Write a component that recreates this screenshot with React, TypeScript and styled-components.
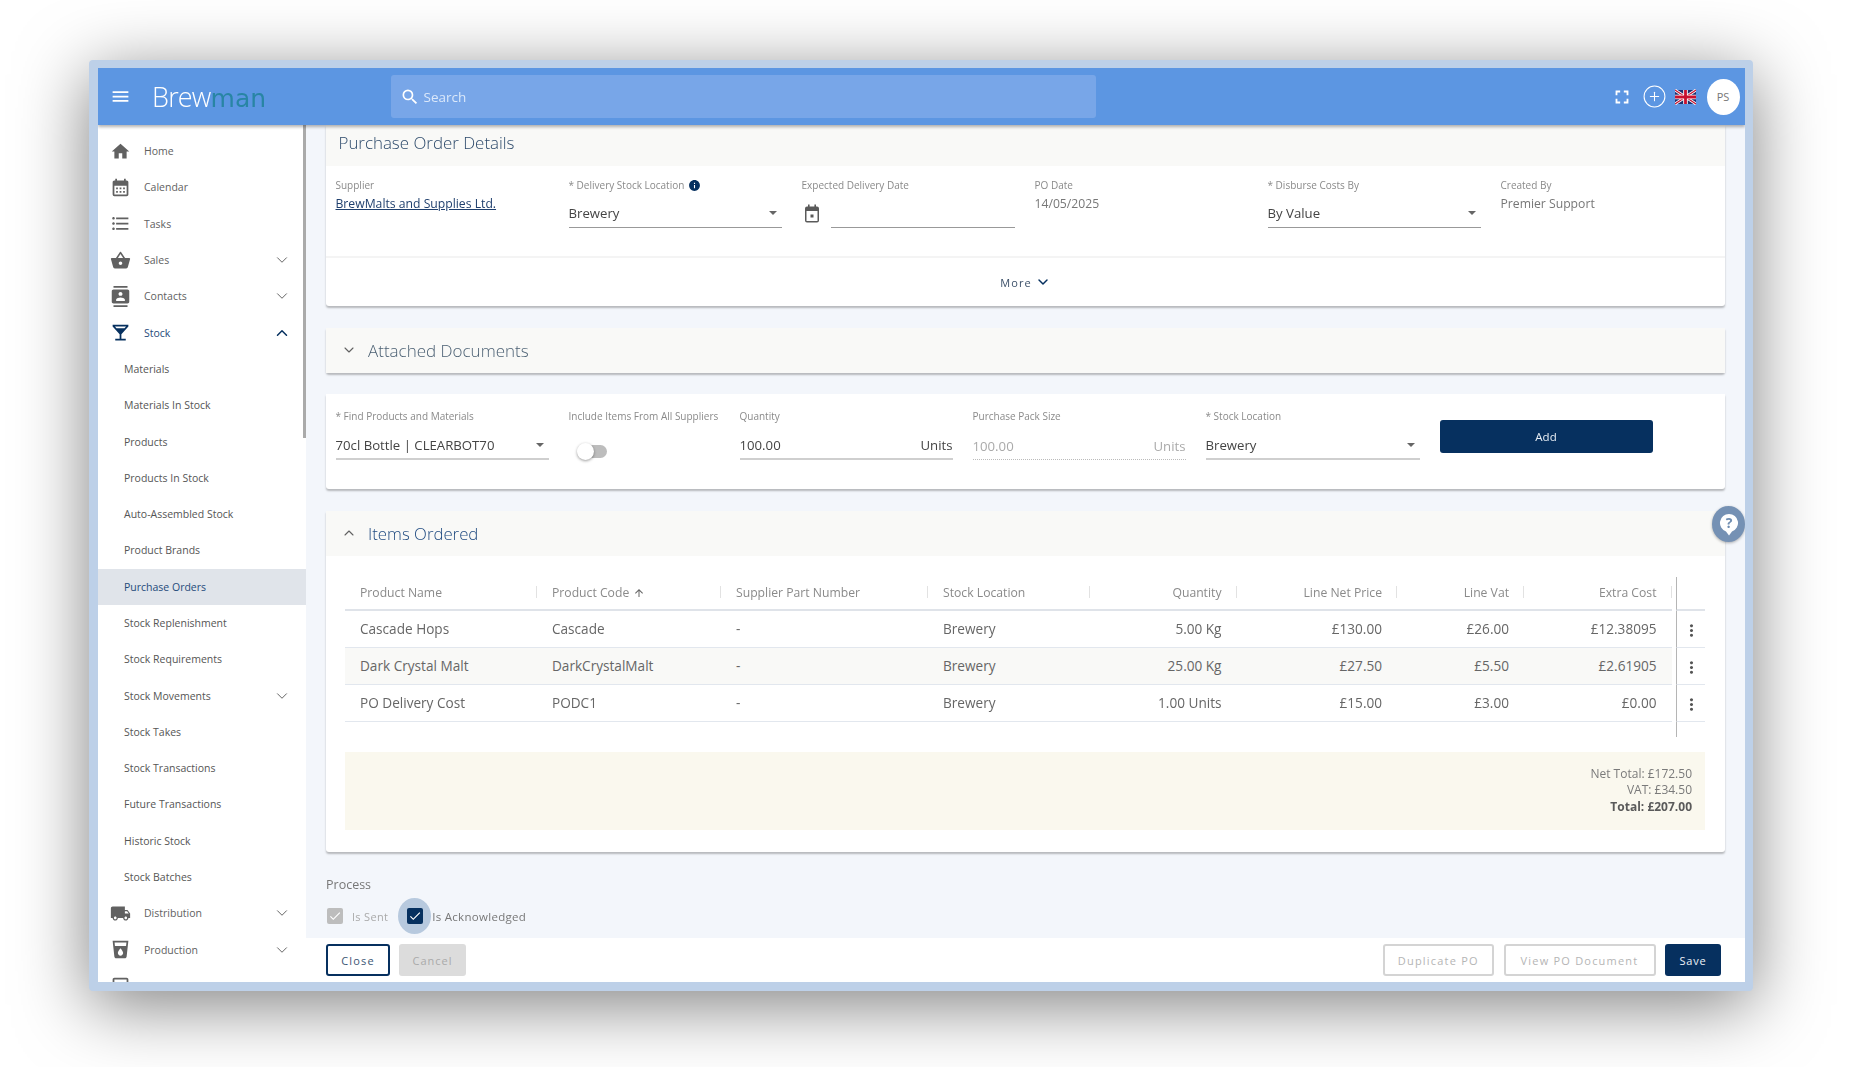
import React from 'react';
import styled, { createGlobalStyle } from 'styled-components';
import { ChevronDown, ChevronUp, CirclePlus } from 'lucide-react';
import {
  MdArrowUpward,
  MdCalendarMonth,
  MdCheck,
  MdCheckBoxOutlineBlank,
  MdContacts,
  MdFormatListBulleted,
  MdFullscreen,
  MdHome,
  MdInfo,
  MdLocalBar,
  MdLocalDrink,
  MdLocalShipping,
  MdMenu,
  MdMoreVert,
  MdSearch,
  MdShoppingBasket,
} from 'react-icons/md';

const navy = '#06305f';
const grey = '#616161';

const GlobalStyle = createGlobalStyle`
  html, body {
    margin: 0;
    padding: 0;
    background: #fff;
    font-family: "Open Sans", "Noto Sans", sans-serif;
  }
  * { box-sizing: border-box; }
`;

type NavItem = {
  label: string;
  icon?: React.ReactNode;
  open?: boolean;
  hasChildren?: boolean;
  active?: boolean;
  sub?: boolean;
};

const navItems: NavItem[] = [
  { label: 'Home', icon: <MdHome /> },
  { label: 'Calendar', icon: <MdCalendarMonth /> },
  { label: 'Tasks', icon: <MdFormatListBulleted /> },
  { label: 'Sales', icon: <MdShoppingBasket />, hasChildren: true },
  { label: 'Contacts', icon: <MdContacts />, hasChildren: true },
  { label: 'Stock', icon: <MdLocalBar />, hasChildren: true, open: true },
  { label: 'Materials', sub: true },
  { label: 'Materials In Stock', sub: true },
  { label: 'Products', sub: true },
  { label: 'Products In Stock', sub: true },
  { label: 'Auto-Assembled Stock', sub: true },
  { label: 'Product Brands', sub: true },
  { label: 'Purchase Orders', sub: true, active: true },
  { label: 'Stock Replenishment', sub: true },
  { label: 'Stock Requirements', sub: true },
  { label: 'Stock Movements', sub: true, hasChildren: true },
  { label: 'Stock Takes', sub: true },
  { label: 'Stock Transactions', sub: true },
  { label: 'Future Transactions', sub: true },
  { label: 'Historic Stock', sub: true },
  { label: 'Stock Batches', sub: true },
  { label: 'Distribution', icon: <MdLocalShipping />, hasChildren: true },
  { label: 'Production', icon: <MdLocalDrink />, hasChildren: true },
  { label: 'Purchasing', icon: <MdCheckBoxOutlineBlank />, hasChildren: true },
];

const orderRows = [
  ['Cascade Hops', 'Cascade', '-', 'Brewery', '5.00 Kg', '£130.00', '£26.00', '£12.38095'],
  ['Dark Crystal Malt', 'DarkCrystalMalt', '-', 'Brewery', '25.00 Kg', '£27.50', '£5.50', '£2.61905'],
  ['PO Delivery Cost', 'PODC1', '-', 'Brewery', '1.00 Units', '£15.00', '£3.00', '£0.00'],
];

const UkFlag = () => (
  <svg width="21" height="16" viewBox="0 0 60 40">
    <rect width="60" height="40" fill="#1d2f6f" />
    <path d="M0 0 60 40M60 0 0 40" stroke="#fff" strokeWidth="8" />
    <path d="M0 0 60 40M60 0 0 40" stroke="#c8102e" strokeWidth="3" />
    <path d="M30 0V40M0 20H60" stroke="#fff" strokeWidth="13" />
    <path d="M30 0V40M0 20H60" stroke="#c8102e" strokeWidth="8" />
  </svg>
);

const CalendarGlyph = () => (
  <svg width="14" height="19" viewBox="0 0 14 19">
    <path d="M3 0.5h1.6v2h4.8v-2H11v2h1a2 2 0 0 1 2 2v12a2 2 0 0 1-2 2H2a2 2 0 0 1-2-2v-12a2 2 0 0 1 2-2h1z" fill="#5a5a5a" />
    <rect x="1.5" y="7" width="11" height="10" fill="#fff" />
    <rect x="5.5" y="10.5" width="3" height="3" fill="#5a5a5a" />
  </svg>
);

const HelpBubble = () => (
  <svg width="20" height="23" viewBox="0 0 20 23">
    <path d="M10 1a9 9 0 0 1 3 17.5L10 22.5 7 18.5A9 9 0 0 1 10 1z" fill="#fff" />
    <text x="10" y="15" textAnchor="middle" fontSize="14" fontWeight="700" fontFamily="Open Sans, sans-serif" fill="#6f8db1">?</text>
  </svg>
);

const App = () => (
  <Page>
    <GlobalStyle />
    <Window>
      <TopBar>
        <Brand>
          <MenuButton><MdMenu /></MenuButton>
          <Logo>Brew<LogoAccent>man</LogoAccent></Logo>
        </Brand>
        <SearchBox>
          <MdSearch />
          <span>Search</span>
        </SearchBox>
        <TopActions>
          <MdFullscreen size={22} />
          <CirclePlus size={25} strokeWidth={1} />
          <UkFlag />
          <Avatar>PS</Avatar>
        </TopActions>
      </TopBar>

      <Body>
        <Sidebar>
          <ScrollThumb />
          {navItems.map(item => (
            <NavRow key={item.label} $sub={item.sub} $active={item.active}>
              {item.icon && <NavIcon $open={item.open}>{item.icon}</NavIcon>}
              <NavLabel $open={item.open} $active={item.active} $sub={item.sub}>{item.label}</NavLabel>
              {item.hasChildren && (
                <NavChevron $open={item.open}>
                  {item.open ? <ChevronUp size={18} strokeWidth={2} /> : <ChevronDown size={18} strokeWidth={1.3} />}
                </NavChevron>
              )}
            </NavRow>
          ))}
        </Sidebar>

        <Main>
          <Content>
            <HelpButton><HelpBubble /></HelpButton>

            <Card>
              <CardHeader>
                <CardTitle>Purchase Order Details</CardTitle>
              </CardHeader>
              <DetailsGrid>
                <Field>
                  <FieldLabel>Supplier</FieldLabel>
                  <SupplierLink>BrewMalts and Supplies Ltd.</SupplierLink>
                </Field>
                <Field>
                  <FieldLabel>* Delivery Stock Location <InfoDot><MdInfo /></InfoDot></FieldLabel>
                  <SelectBox>Brewery<Caret /></SelectBox>
                </Field>
                <Field>
                  <FieldLabel>Expected Delivery Date</FieldLabel>
                  <DateRow>
                    <DateIcon><CalendarGlyph /></DateIcon>
                    <SelectBox />
                  </DateRow>
                </Field>
                <Field>
                  <FieldLabel>PO Date</FieldLabel>
                  <StaticValue>14/05/2025</StaticValue>
                </Field>
                <Field>
                  <FieldLabel>* Disburse Costs By</FieldLabel>
                  <SelectBox>By Value<Caret /></SelectBox>
                </Field>
                <Field>
                  <FieldLabel>Created By</FieldLabel>
                  <StaticValue>Premier Support</StaticValue>
                </Field>
              </DetailsGrid>
              <MoreRow>More <ChevronDown size={16} strokeWidth={2.2} color={navy} /></MoreRow>
            </Card>

            <Card>
              <AccordionHeader>
                <ChevronDown size={16} strokeWidth={1.6} color={grey} />
                <AccordionTitle>Attached Documents</AccordionTitle>
              </AccordionHeader>
            </Card>

            <Card>
              <AddGrid>
                <Field>
                  <FieldLabel>* Find Products and Materials</FieldLabel>
                  <SelectBox $thick>70cl Bottle | CLEARBOT70<Caret /></SelectBox>
                </Field>
                <Field>
                  <FieldLabel>Include Items From All Suppliers</FieldLabel>
                  <Toggle><ToggleKnob /></Toggle>
                </Field>
                <Field>
                  <FieldLabel>Quantity</FieldLabel>
                  <SelectBox $thick>100.00<Unit>Units</Unit></SelectBox>
                </Field>
                <Field>
                  <FieldLabel>Purchase Pack Size</FieldLabel>
                  <SelectBox $disabled>100.00<Unit>Units</Unit></SelectBox>
                </Field>
                <Field>
                  <FieldLabel>* Stock Location</FieldLabel>
                  <SelectBox $thick>Brewery<Caret /></SelectBox>
                </Field>
                <AddButton>Add</AddButton>
              </AddGrid>
            </Card>

            <Card>
              <AccordionHeader $active>
                <ChevronUp size={16} strokeWidth={1.6} color={grey} />
                <AccordionTitle $active>Items Ordered</AccordionTitle>
              </AccordionHeader>
              <TableArea>
                <TableRow>
                  <RowCells $head>
                    <HeadCell>Product Name</HeadCell>
                    <HeadCell>Product Code <MdArrowUpward /></HeadCell>
                    <HeadCell>Supplier Part Number</HeadCell>
                    <HeadCell>Stock Location</HeadCell>
                    <HeadCell $right>Quantity</HeadCell>
                    <HeadCell $right>Line Net Price</HeadCell>
                    <HeadCell $right>Line Vat</HeadCell>
                    <HeadCell $right>Extra Cost</HeadCell>
                  </RowCells>
                  <ActionCell $head />
                </TableRow>
                {orderRows.map((row, index) => (
                  <TableRow key={row[0]}>
                    <RowCells $alt={index === 1}>
                      {row.map((cell, cellIndex) => (
                        <DataCell key={cellIndex} $right={cellIndex > 3}>{cell}</DataCell>
                      ))}
                    </RowCells>
                    <ActionCell><MdMoreVert /></ActionCell>
                  </TableRow>
                ))}
                <TableRow>
                  <TableFiller />
                  <ActionCell $filler />
                </TableRow>
              </TableArea>
              <Totals>
                <span>Net Total: £172.50</span>
                <span>VAT: £34.50</span>
                <strong>Total: £207.00</strong>
              </Totals>
            </Card>

            <ProcessTitle>Process</ProcessTitle>
            <ProcessRow>
              <Tick $disabled><MdCheck /></Tick>
              <TickLabel $disabled>Is Sent</TickLabel>
              <TickHalo><Tick><MdCheck /></Tick></TickHalo>
              <TickLabel $tight>Is Acknowledged</TickLabel>
            </ProcessRow>
          </Content>

          <Footer>
            <OutlineButton $primary $width={64}>Close</OutlineButton>
            <MutedButton>Cancel</MutedButton>
            <FooterRight>
              <OutlineButton $width={111.5}>Duplicate PO</OutlineButton>
              <OutlineButton $width={152}>View PO Document</OutlineButton>
              <SaveButton>Save</SaveButton>
            </FooterRight>
          </Footer>
        </Main>
      </Body>
    </Window>
  </Page>
);

const Page = styled.div`
  width: 1864px;
  height: 1067px;
  padding: 60px 0 0 89px;
  overflow: hidden;
  background: #fff;
`;

const Window = styled.div`
  display: flex;
  flex-direction: column;
  width: 1664px;
  height: 931px;
  border: solid #bdd0e8;
  border-width: 8px 8px 9px 9px;
  border-radius: 4px;
  background: #f3f6fb;
  box-shadow: 0 14px 70px rgba(0, 0, 0, 0.5);
  overflow: hidden;
  filter: blur(0.35px);
`;

const TopBar = styled.header`
  position: relative;
  z-index: 3;
  display: flex;
  align-items: center;
  flex: none;
  height: 57px;
  background: #5c96e2;
  box-shadow: 0 2px 3px rgba(0, 0, 0, 0.3);
`;

const Brand = styled.div`
  display: flex;
  align-items: center;
  width: 292.5px;
  padding-left: 12px;
`;

const MenuButton = styled.div`
  display: flex;
  width: 21px;
  margin-right: 21px;
  color: #fff;
  font-size: 21px;
`;

const Logo = styled.div`
  color: #fff;
  font-size: 27px;
  font-weight: 300;
  letter-spacing: -0.8px;
  line-height: 1;
`;

const LogoAccent = styled.span`
  color: #2885a4;
  font-family: "DejaVu Sans", sans-serif;
  font-size: 25px;
  font-weight: 400;
  letter-spacing: 0;
`;

const SearchBox = styled.div`
  display: flex;
  align-items: center;
  gap: 4px;
  width: 705.5px;
  height: 43px;
  padding-left: 9px;
  border-radius: 3px;
  background: #78a6e8;
  color: #dbe8fa;
  font-size: 13.5px;

  svg {
    color: #fff;
    font-size: 20px;
  }
`;

const TopActions = styled.div`
  display: flex;
  align-items: center;
  gap: 8px;
  margin-left: auto;
  padding-right: 5.5px;
  color: #fff;

  & > svg:first-child {
    margin-right: 1px;
  }
`;

const Avatar = styled.div`
  display: flex;
  align-items: center;
  justify-content: center;
  width: 33px;
  height: 36px;
  margin-left: 3px;
  border-radius: 50%;
  background: #fff;
  color: #777;
  font-size: 11px;
`;

const Body = styled.div`
  display: flex;
  flex: 1;
  min-height: 0;
`;

const Sidebar = styled.nav`
  position: relative;
  flex: none;
  width: 208px;
  padding-top: 8px;
  background: #fff;
  overflow: hidden;
`;

const ScrollThumb = styled.div`
  position: absolute;
  top: 0;
  right: 0;
  width: 3.5px;
  height: 313px;
  background: #aaa;
`;

const NavRow = styled.div<{ $sub?: boolean; $active?: boolean }>`
  display: flex;
  align-items: center;
  height: 36.3px;
  padding: 0 15px 0 ${props => (props.$sub ? '26px' : '12px')};
  background: ${props => (props.$active ? '#e0e4ea' : 'transparent')};
`;

const NavIcon = styled.span<{ $open?: boolean }>`
  display: flex;
  justify-content: center;
  width: 21px;
  margin-right: 13px;
  color: ${props => (props.$open ? navy : grey)};
  font-size: 21px;
`;

const NavLabel = styled.span<{ $open?: boolean; $active?: boolean; $sub?: boolean }>`
  color: ${props => (props.$open || props.$active ? '#1f4a7a' : props.$sub ? '#555' : grey)};
  font-size: 10.5px;
  white-space: nowrap;
`;

const NavChevron = styled.span<{ $open?: boolean }>`
  display: flex;
  margin-left: auto;
  color: ${props => (props.$open ? navy : grey)};
`;

const Main = styled.main`
  display: flex;
  flex-direction: column;
  flex: 1;
  min-width: 0;
`;

const Content = styled.div`
  position: relative;
  display: flex;
  flex-direction: column;
  flex: 1;
  min-height: 0;
  padding: 0 20px;
  overflow: hidden;
`;

const HelpButton = styled.div`
  position: absolute;
  top: 381px;
  right: 0;
  display: flex;
  align-items: center;
  justify-content: center;
  width: 33px;
  height: 36px;
  border-radius: 50%;
  background: #7591b4;
  box-shadow: 0 1px 3px rgba(0, 0, 0, 0.3);
`;

const Card = styled.section`
  flex: none;
  margin-bottom: 21.5px;
  border-radius: 0 0 3px 3px;
  background: #fff;
  box-shadow: 0 2px 2px rgba(0, 0, 0, 0.25);
`;

const CardHeader = styled.div`
  display: flex;
  align-items: center;
  height: 41px;
  padding: 0 0 6px 12.5px;
  background: #f9f9f7;
`;

const CardTitle = styled.h2`
  margin: 0;
  color: #2d4a6b;
  font-size: 16.9px;
  font-weight: 300;
`;

const DetailsGrid = styled.div`
  display: grid;
  grid-template-columns: repeat(6, 213px);
  column-gap: 20px;
  height: 92px;
  padding: 11px 0 0 9.5px;
  border-bottom: 2px solid #f4f4f4;
`;

const AddGrid = styled.div`
  display: grid;
  grid-template-columns: 213px 151px 213px 213px 214px 213px;
  column-gap: 20px;
  height: 95px;
  padding: 14px 0 0 9.5px;
`;

const Field = styled.div`
  min-width: 0;
`;

const FieldLabel = styled.div`
  display: flex;
  align-items: center;
  gap: 4px;
  height: 16px;
  color: #8a8a8a;
  font-size: 10px;
  white-space: nowrap;
`;

const InfoDot = styled.span`
  display: flex;
  color: ${navy};
  font-size: 13px;
`;

const SupplierLink = styled.a`
  display: block;
  margin-top: 2px;
  color: #1f3f6d;
  font-size: 12.2px;
  text-decoration: underline;
`;

const StaticValue = styled.div`
  margin-top: 2px;
  color: #777;
  font-size: 12.2px;
`;

const SelectBox = styled.div<{ $thick?: boolean; $disabled?: boolean }>`
  display: flex;
  align-items: center;
  justify-content: space-between;
  flex: 1;
  height: ${props => (props.$thick || props.$disabled ? '33px' : '32px')};
  margin-top: 3px;
  padding: ${props => (props.$thick || props.$disabled ? '5px' : '3px')} 5px 0 0;
  border-bottom: ${props =>
    props.$disabled ? '1px dotted #bbb' : props.$thick ? '2px solid #cfcfcf' : '1px solid #999'};
  color: ${props => (props.$disabled ? '#aaa' : '#444')};
  font-size: 13.2px;
  white-space: nowrap;
`;

const Unit = styled.span`
  margin-right: -5px;
  color: inherit;
`;

const Caret = styled.span`
  width: 0;
  height: 0;
  border: 4.5px solid transparent;
  border-top-color: #666;
  border-bottom: 0;
`;

const DateRow = styled.div`
  display: flex;
  align-items: center;
  gap: 12px;
`;

const DateIcon = styled.span`
  display: flex;
  margin: 6px 0 0 3px;
`;

const MoreRow = styled.div`
  display: flex;
  align-items: center;
  justify-content: center;
  gap: 3px;
  height: 48px;
  color: #3b4f68;
  font-size: 11px;
  letter-spacing: 1.1px;
`;

const AccordionHeader = styled.div<{ $active?: boolean }>`
  display: flex;
  align-items: center;
  gap: 11px;
  height: 45px;
  padding-left: 15px;
  background: #f9f9f7;
`;

const AccordionTitle = styled.h3<{ $active?: boolean }>`
  margin: 0;
  color: ${props => (props.$active ? '#1f4a80' : '#4a5f72')};
  font-size: ${props => (props.$active ? '16.8px' : '17px')};
  font-weight: 300;
`;

const Toggle = styled.div`
  position: relative;
  width: 27px;
  height: 13px;
  margin: 21px 0 0 11px;
  border-radius: 7px;
  background: #bdbdbd;
`;

const ToggleKnob = styled.span`
  position: absolute;
  top: -2px;
  left: -3px;
  width: 17px;
  height: 17px;
  border-radius: 50%;
  background: #fff;
  box-shadow: 0 1px 3px rgba(0, 0, 0, 0.4);
`;

const AddButton = styled.div`
  display: flex;
  align-items: center;
  justify-content: center;
  height: 33px;
  margin-top: 12px;
  border-radius: 3px;
  background: ${navy};
  color: #e8eef5;
  font-size: 11.5px;
`;

const TableArea = styled.div`
  padding: 21px 20px 0 19px;
`;

const TableRow = styled.div`
  display: flex;
`;

const RowCells = styled.div<{ $head?: boolean; $alt?: boolean }>`
  display: grid;
  grid-template-columns: 192px 184px 207px 162px 146.5px 160.5px 127px 147.5px;
  align-items: center;
  width: 1326.5px;
  height: ${props => (props.$head ? '34px' : '37px')};
  border-bottom: ${props => (props.$head ? '2px solid #dfe3e9' : '1px solid #e2e7ee')};
  background: ${props => (props.$alt ? '#f9f9f7' : 'transparent')};
`;

const TableFiller = styled.div`
  width: 1326.5px;
  height: 15px;
`;

const HeadCell = styled.div<{ $right?: boolean }>`
  position: relative;
  display: flex;
  align-items: center;
  justify-content: ${props => (props.$right ? 'flex-end' : 'flex-start')};
  gap: 4px;
  padding: 0 15px;
  color: #8a8a8a;
  font-size: 12.2px;
  white-space: nowrap;

  svg {
    color: #666;
    font-size: 12px;
  }

  &::after {
    content: '';
    position: absolute;
    top: 2px;
    right: 0;
    width: 1px;
    height: 12px;
    background: #e2e2e2;
  }
`;

const DataCell = styled.div<{ $right?: boolean }>`
  padding: 0 15px;
  color: #666;
  font-size: 13.6px;
  text-align: ${props => (props.$right ? 'right' : 'left')};
  white-space: nowrap;
`;

const ActionCell = styled.div<{ $head?: boolean; $filler?: boolean }>`
  display: flex;
  align-items: center;
  justify-content: center;
  width: 29px;
  margin-left: 4.5px;
  padding-top: 4px;
  border-left: 1px solid #b5b5b5;
  border-bottom: ${props =>
    props.$filler ? '0' : props.$head ? '2px solid #dfe3e9' : '1px solid #e2e7ee'};
  color: #555;
  font-size: 19px;
`;

const Totals = styled.div`
  display: flex;
  flex-direction: column;
  align-items: flex-end;
  justify-content: center;
  height: 78px;
  margin: 15px 20px 22px 19px;
  padding-right: 13px;
  background: #faf8ee;
  color: #7a7a7a;
  font-size: 12px;
  line-height: 16.3px;

  strong {
    color: #5a5a5a;
    font-weight: 700;
  }
`;

const ProcessTitle = styled.div`
  margin-top: 2px;
  color: #777;
  font-size: 12.5px;
  line-height: 20px;
`;

const ProcessRow = styled.div`
  display: flex;
  align-items: center;
  margin-top: 3px;
  padding-left: 1px;
`;

const Tick = styled.span<{ $disabled?: boolean }>`
  display: flex;
  align-items: center;
  justify-content: center;
  width: 16px;
  height: 16px;
  border-radius: 2px;
  background: ${props => (props.$disabled ? '#bdbdbd' : navy)};
  color: #fff;
  font-size: 14px;
`;

const TickHalo = styled.span`
  display: flex;
  align-items: center;
  justify-content: center;
  width: 33px;
  height: 36px;
  margin-left: 10px;
  border-radius: 50%;
  background: #b7c9de;
`;

const TickLabel = styled.span<{ $disabled?: boolean; $tight?: boolean }>`
  margin-left: ${props => (props.$tight ? '1px' : '9px')};
  color: ${props => (props.$disabled ? '#aaa' : '#777')};
  font-size: ${props => (props.$tight ? '11.5px' : '11px')};
  letter-spacing: 0.3px;
`;

const Footer = styled.footer`
  display: flex;
  align-items: center;
  flex: none;
  gap: 9px;
  height: 44px;
  padding: 0 24px 0 20px;
  background: #fff;
`;

const FooterRight = styled.div`
  display: flex;
  gap: 9.5px;
  margin-left: auto;
`;

const OutlineButton = styled.div<{ $primary?: boolean; $width: number }>`
  display: flex;
  align-items: center;
  justify-content: center;
  width: ${props => props.$width}px;
  height: 32px;
  border: ${props => (props.$primary ? `2px solid ${navy}` : '2px solid #d4d4d4')};
  border-radius: 3px;
  color: ${props => (props.$primary ? '#3b5674' : '#b5b5b5')};
  font-size: 11px;
  letter-spacing: 1.2px;
`;

const MutedButton = styled.div`
  display: flex;
  align-items: center;
  justify-content: center;
  width: 67px;
  height: 32px;
  border-radius: 3px;
  background: #dcdcdc;
  color: #aaa;
  font-size: 11px;
  letter-spacing: 1px;
`;

const SaveButton = styled.div`
  display: flex;
  align-items: center;
  justify-content: center;
  width: 56px;
  height: 32px;
  border-radius: 3px;
  background: ${navy};
  color: #eef2f7;
  font-size: 11px;
  letter-spacing: 0.8px;
`;

export default App;
